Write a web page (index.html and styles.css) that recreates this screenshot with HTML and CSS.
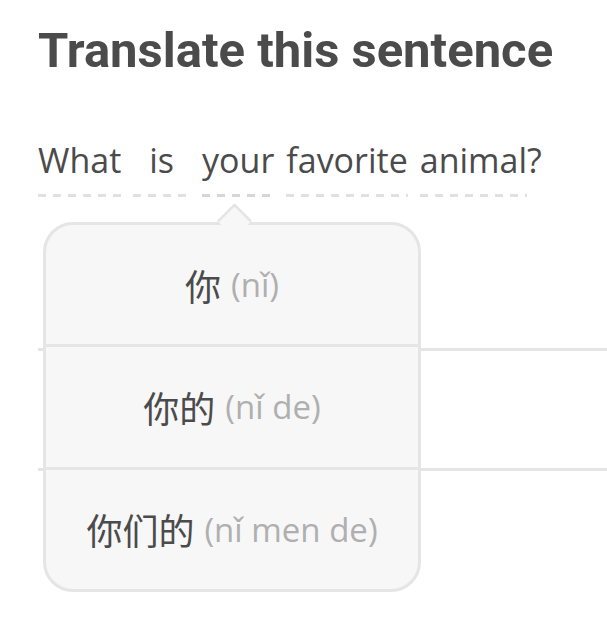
FILE: index.html
```html
<!DOCTYPE html>
<html lang="en">
<head>
    <meta charset="UTF-8">
    <meta name="viewport" content="width=device-width, initial-scale=1.0">
    <title>Translate this sentence</title>
    <link rel="stylesheet" href="styles.css">
</head>
<body>

    <div class="page">
        <h1 class="title">Translate this sentence</h1>

        <div class="exercise">
            <div class="sentence">
                <span class="token">What</span>
                <span class="token token-short">is</span>
                <span class="token token-active">your</span>
                <span class="token">favorite</span>
                <span class="group"><span class="token">animal</span><span class="punct">?</span></span>
            </div>

            <div class="answer">
                <div class="answer-line"></div>
                <div class="answer-line"></div>
            </div>

            <div class="hint">
                <div class="hint-row">
                    <span class="hanzi">你</span>
                    <span class="pinyin">(nǐ)</span>
                </div>
                <div class="hint-row">
                    <span class="hanzi">你的</span>
                    <span class="pinyin">(nǐ de)</span>
                </div>
                <div class="hint-row">
                    <span class="hanzi">你们的</span>
                    <span class="pinyin">(nǐ men de)</span>
                </div>
            </div>
        </div>
    </div>

</body>
</html>
```

FILE: styles.css
```css
body {
    margin: 0;
    background-color: #fff;
    color: #4b4b4b;
    font-family: "Open Sans", "Noto Sans CJK SC", sans-serif;
}

.page {
    min-height: 629px;
    padding-left: 38px;
}

.title {
    margin: 23px 0 0 0;
    font-family: Roboto, "Open Sans", sans-serif;
    font-size: 49px;
    font-weight: 700;
    line-height: 56px;
    color: #4b4b4b;
}

.exercise {
    position: relative;
    margin-top: 61px;
    padding-bottom: 140px;
}

.sentence {
    display: flex;
    align-items: flex-start;
    column-gap: 12px;
    font-size: 34px;
    line-height: 40px;
}

.token {
    display: inline-block;
    padding-bottom: 17px;
    background-image: repeating-linear-gradient(to right, #e0e0e0 0 8px, transparent 8px 15px);
    background-repeat: no-repeat;
    background-position: left bottom;
    background-size: 100% 3px;
}

.token-short {
    padding-left: 16px;
    padding-right: 16px;
}

.token-active {
    background-image: repeating-linear-gradient(to right, #d6d6d6 0 8px, transparent 8px 15px);
}

.group {
    display: inline-flex;
}

.answer {
    margin-top: 34px;
}

.answer-line {
    height: 117px;
    border-bottom: 3px solid #e5e5e5;
}

/* word hint popup, sits over the answer lines */
.hint {
    position: absolute;
    top: 82px;
    left: 5px;
    width: 378px;
    height: 370px;
    box-sizing: border-box;
    display: flex;
    flex-direction: column;
    background-color: #f7f7f7;
    border: 3px solid #e5e5e5;
    border-radius: 30px;
}

.hint::before {
    content: "";
    position: absolute;
    top: -17px;
    left: 176px;
    width: 25px;
    height: 25px;
    box-sizing: border-box;
    background-color: #f7f7f7;
    border-top: 3px solid #e5e5e5;
    border-left: 3px solid #e5e5e5;
    border-top-left-radius: 3px;
    transform: rotate(45deg);
}

.hint-row {
    flex: 1;
    display: flex;
    align-items: center;
    justify-content: center;
    gap: 10px;
}

.hint-row + .hint-row {
    border-top: 3px solid #e5e5e5;
}

.hanzi {
    font-family: "Noto Sans CJK SC", sans-serif;
    font-size: 36px;
    color: #4b4b4b;
}

.pinyin {
    font-size: 33px;
    color: #afafaf;
}
```
